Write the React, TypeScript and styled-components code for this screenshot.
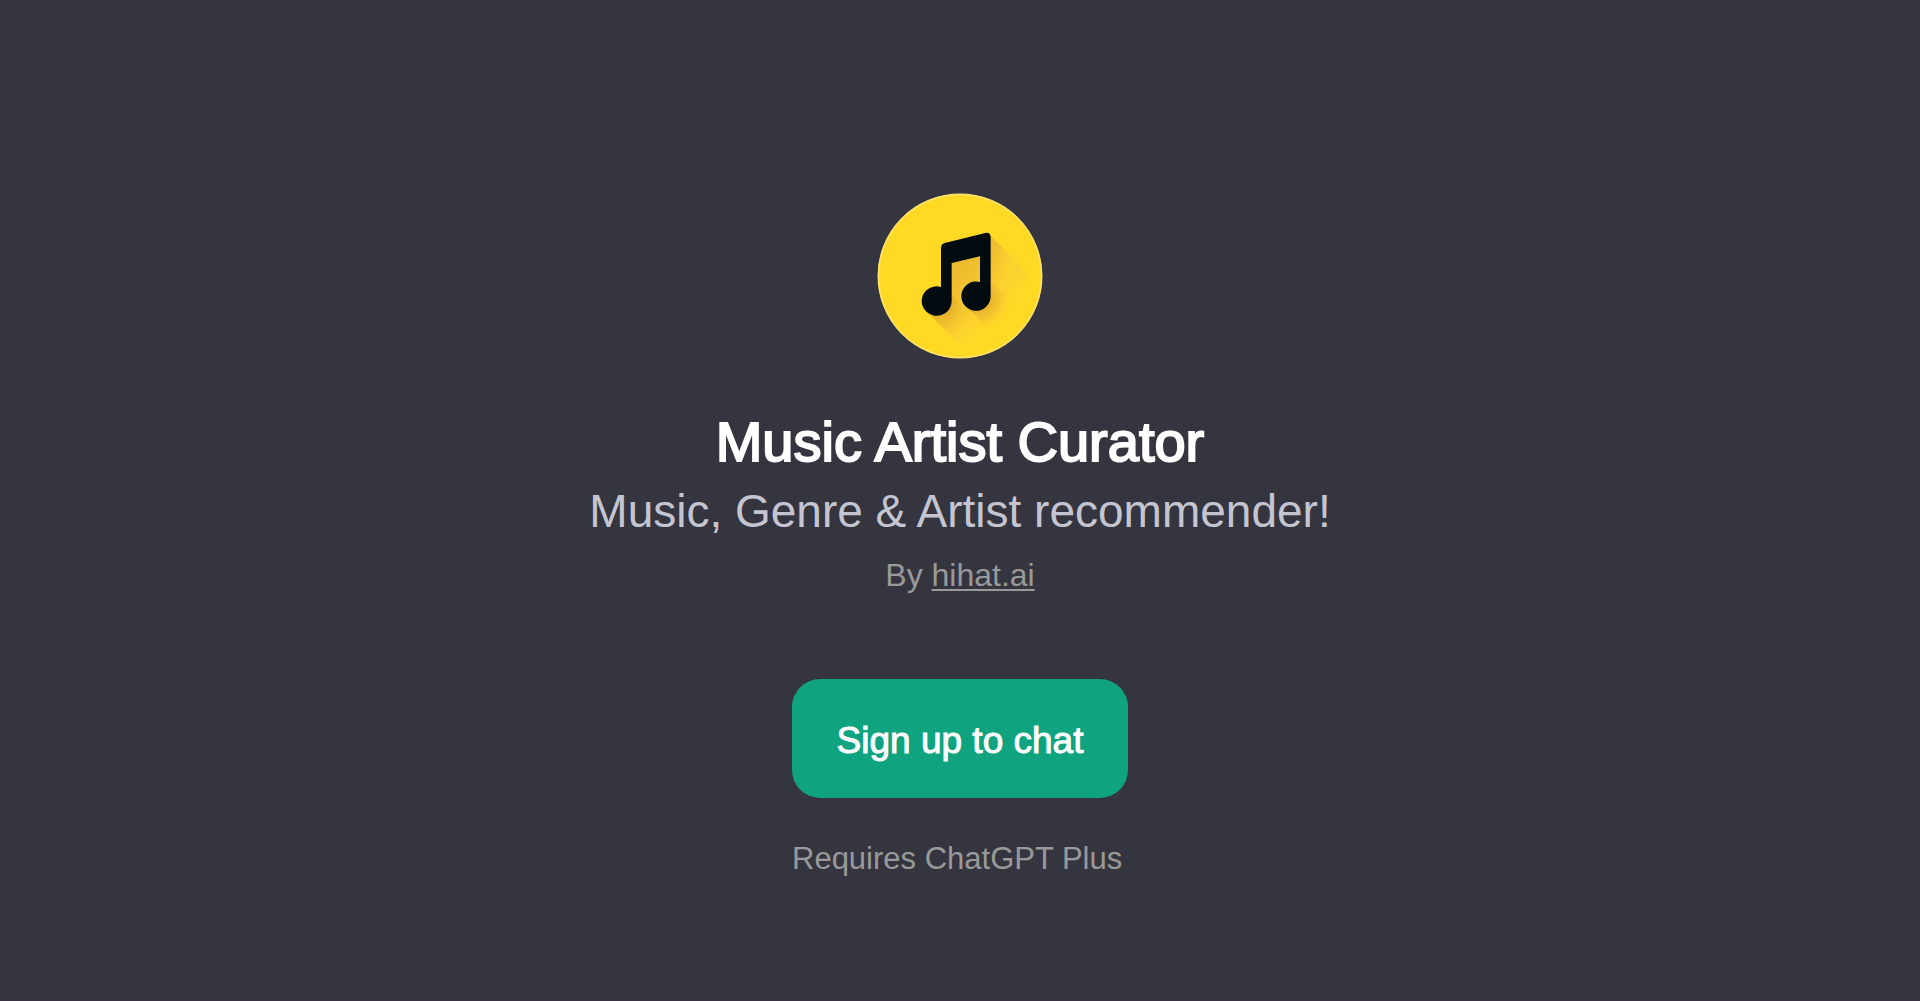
import React from "react";
import styled, { createGlobalStyle } from "styled-components";

const GlobalStyle = createGlobalStyle`
  *, *::before, *::after {
    box-sizing: border-box;
  }
  body {
    margin: 0;
    background: #353540;
    font-family: "Liberation Sans", Arial, sans-serif;
  }
`;

const Page = styled.main`
  display: flex;
  flex-direction: column;
  align-items: center;
  min-height: 100vh;
  padding: 193px 24px 24px;
  border-bottom: 1px solid #383240;
`;

const Logo = styled.svg`
  display: block;
  width: 166px;
  height: 166px;
  margin-bottom: 49px;
`;

const Intro = styled.header`
  display: flex;
  flex-direction: column;
  align-items: center;
  text-align: center;
  margin-bottom: 84px;
`;

const Title = styled.h1`
  margin: 0 0 5px;
  color: #ffffff;
  font-size: 56px;
  font-weight: 400;
  line-height: 68px;
  -webkit-text-stroke: 2px #ffffff;
`;

const Tagline = styled.p`
  margin: 0 0 14px;
  color: #c5c5d2;
  font-size: 46px;
  line-height: 60px;
`;

const Byline = styled.p`
  margin: 0;
  color: #999999;
  font-size: 32px;
  line-height: 40px;
`;

const AuthorLink = styled.a`
  color: inherit;
  text-decoration: underline;
  text-decoration-thickness: 2px;
  text-underline-offset: 3px;
  text-decoration-skip-ink: none;
`;

const Actions = styled.section`
  display: flex;
  flex-direction: column;
  align-items: flex-start;
  gap: 41px;
`;

const SignUpButton = styled.button`
  min-width: 336px;
  padding: 40px 44px 35px;
  border: 0;
  border-radius: 28px;
  background: #10a37f;
  color: #ffffff;
  font-family: inherit;
  font-size: 37px;
  line-height: 44px;
  -webkit-text-stroke: 1px #ffffff;
  cursor: pointer;
`;

const Requirement = styled.p`
  margin: 0;
  color: #999999;
  font-size: 31px;
  line-height: 40px;
`;

function MusicLogo() {
  return (
    <Logo viewBox="51 40 498 498" role="img" aria-label="Music note">
      <defs>
        <linearGradient id="noteShade" gradientUnits="userSpaceOnUse" x1="270" y1="270" x2="420" y2="420">
          <stop offset="0" stopColor="#ecb92d" />
          <stop offset="0.35" stopColor="#f3c430" />
          <stop offset="0.75" stopColor="#fcd330" />
          <stop offset="1" stopColor="#ffd92a" stopOpacity="0" />
        </linearGradient>
        <linearGradient id="stemShade" gradientUnits="userSpaceOnUse" x1="385" y1="260" x2="490" y2="290">
          <stop offset="0" stopColor="#efbd2f" />
          <stop offset="0.5" stopColor="#fcd22f" />
          <stop offset="1" stopColor="#ffd92a" stopOpacity="0" />
        </linearGradient>
        <radialGradient id="leftHeadShade" gradientUnits="userSpaceOnUse" cx="235" cy="370" r="120">
          <stop offset="0.35" stopColor="#e8b32d" />
          <stop offset="0.6" stopColor="#f4c42f" />
          <stop offset="1" stopColor="#fdd42c" stopOpacity="0" />
        </radialGradient>
        <radialGradient id="rightHeadShade" gradientUnits="userSpaceOnUse" cx="352" cy="354" r="100">
          <stop offset="0.35" stopColor="#e8b32d" />
          <stop offset="0.65" stopColor="#f4c42f" />
          <stop offset="1" stopColor="#fdd42c" stopOpacity="0" />
        </radialGradient>
      </defs>
      <circle cx="300" cy="289" r="246" fill="#ffd924" />
      <path d="M388 165L500 277Q512 340 450 420Q390 500 315 512L205 400L258 340V240Z" fill="url(#noteShade)" />
      <path d="M388 165L500 277L450 400L391 390Z" fill="url(#stemShade)" />
      <path d="M197 392L315 510L370 440L275 345Z" fill="url(#leftHeadShade)" />
      <path d="M316 378L420 482L490 400L391 301Z" fill="url(#rightHeadShade)" />
      <circle cx="300" cy="289" r="245" fill="none" stroke="#ffe36b" strokeWidth="5" />
      <path
        d="M243 205Q243 193 254 190L376 160Q392 157 392 174V348A44 44 0 1 1 360 307V230L275 250V364A45 44 0 1 1 243 322Z"
        fill="#020c10"
      />
    </Logo>
  );
}

export default function App() {
  return (
    <>
      <GlobalStyle />
      <Page>
        <MusicLogo />
        <Intro>
          <Title>Music Artist Curator</Title>
          <Tagline>Music, Genre &amp; Artist recommender!</Tagline>
          <Byline>
            By <AuthorLink href="#hihat">hihat.ai</AuthorLink>
          </Byline>
        </Intro>
        <Actions>
          <SignUpButton type="button">Sign up to chat</SignUpButton>
          <Requirement>Requires ChatGPT Plus</Requirement>
        </Actions>
      </Page>
    </>
  );
}
